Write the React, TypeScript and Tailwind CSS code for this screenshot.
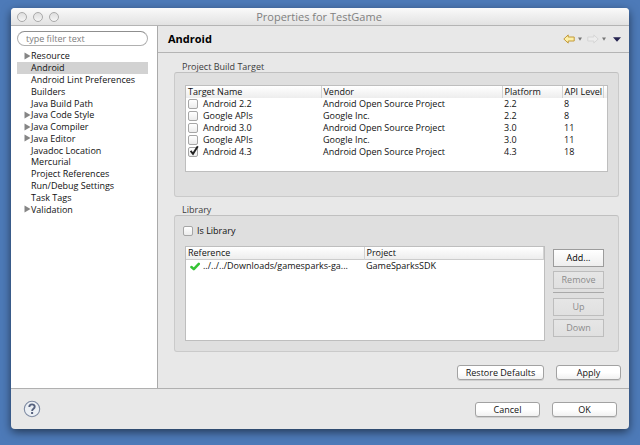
import React from "react";

type Page = { label: string; expandable?: boolean };
type Target = { name: string; vendor: string; platform: string; api: string; checked?: boolean };

const pages: Page[] = [
  { label: "Resource", expandable: true },
  { label: "Android" },
  { label: "Android Lint Preferences" },
  { label: "Builders" },
  { label: "Java Build Path" },
  { label: "Java Code Style", expandable: true },
  { label: "Java Compiler", expandable: true },
  { label: "Java Editor", expandable: true },
  { label: "Javadoc Location" },
  { label: "Mercurial" },
  { label: "Project References" },
  { label: "Run/Debug Settings" },
  { label: "Task Tags" },
  { label: "Validation", expandable: true },
];

const targets: Target[] = [
  { name: "Android 2.2", vendor: "Android Open Source Project", platform: "2.2", api: "8" },
  { name: "Google APIs", vendor: "Google Inc.", platform: "2.2", api: "8" },
  { name: "Android 3.0", vendor: "Android Open Source Project", platform: "3.0", api: "11" },
  { name: "Google APIs", vendor: "Google Inc.", platform: "3.0", api: "11" },
  { name: "Android 4.3", vendor: "Android Open Source Project", platform: "4.3", api: "18", checked: true },
];

function CheckBox({ id, defaultChecked }: { id: string; defaultChecked?: boolean }) {
  return (
    <span className="relative block size-[10px] shrink-0">
      <input
        id={id}
        type="checkbox"
        defaultChecked={defaultChecked}
        className="peer block size-[10px] appearance-none rounded-[2px] border border-[#a6a6a6] bg-linear-to-b from-white to-[#ececec]"
      />
      <svg viewBox="0 0 12 12" className="pointer-events-none absolute -top-0.5 left-0 hidden size-3 peer-checked:block" aria-hidden="true">
        <path d="M2.6 5.8 L5 8.8 L9.8 1.2" fill="none" stroke="#222" strokeWidth="1.9" />
      </svg>
    </span>
  );
}

function SquareButton({ children, disabled }: { children: React.ReactNode; disabled?: boolean }) {
  return (
    <button
      type="button"
      disabled={disabled}
      className="h-[18px] w-full border border-[#9c9c9c] bg-linear-to-b from-white to-[#eeeeee] leading-4 text-black disabled:border-[#bdbdbd] disabled:from-[#e6e6e6] disabled:to-[#e0e0e0] disabled:text-[#8c8c8c]"
    >
      {children}
    </button>
  );
}

function PushButton({ children, wide }: { children: React.ReactNode; wide?: boolean }) {
  return (
    <button
      type="button"
      className={
        (wide ? "w-[87px]" : "w-[65px]") +
        " h-[15px] rounded-[3px] border border-[#a2a2a2] bg-linear-to-b from-white from-50% to-[#f1f1f1] leading-[13px] shadow-[0_1px_0_#cfcfcf]"
      }
    >
      {children}
    </button>
  );
}

function Group({ title, children }: { title: string; children: React.ReactNode }) {
  return (
    <section className="mr-0.5">
      <h2 className="h-[11px] pl-2 leading-[11px] text-[#3c3c3c]">{title}</h2>
      <div className="rounded-[3px] border border-[#cacaca] border-t-[#c0c0c0] bg-[#dfdfdf]">{children}</div>
    </section>
  );
}

const headCell = "h-3 border-[#d2d2d2] pl-0.5 text-left font-medium leading-3";

export default function App() {
  return (
    <div className="flex min-h-screen flex-col bg-[#4d7ab8] px-[11px] pt-2 pb-4 font-['Open_Sans','Noto_Sans',sans-serif] text-[9px] leading-3 font-medium whitespace-nowrap text-[#111111]">
      <main className="flex flex-1 flex-col overflow-hidden rounded-[4px] bg-[#e8e8e8] shadow-[0_3px_10px_rgba(0,0,0,0.55)]">
        <header className="relative flex h-[18px] items-center border-b border-[#b4b4b4] bg-linear-to-b from-[#fafafa] to-[#e2e2e2] pl-1.5">
          <div className="flex gap-1.5">
            {["Close", "Minimize", "Zoom"].map((n) => (
              <button key={n} type="button" aria-label={n} className="size-2.5 rounded-full border border-[#a9a9a9] bg-linear-to-b from-[#dedede] to-[#f5f5f5]" />
            ))}
          </div>
          <h1 className="flex-1 pr-[50px] text-center text-[11px] leading-4 font-normal text-[#808080]">Properties for TestGame</h1>
        </header>

        <div className="flex flex-1">
          <nav aria-label="Property pages" className="w-[147px] shrink-0 border-r border-[#aaaaaa] bg-white pt-[5px] pr-[9px] pl-1.5">
            <input
              type="text"
              aria-label="Filter"
              placeholder="type filter text"
              className="block h-[15px] w-full rounded-full border border-[#b0b0b0] border-t-[#8f8f8f] bg-white px-2 leading-3 placeholder:text-[#7d7d7d]"
            />
            <ul className="mt-1 grid h-[165px] auto-rows-fr">
              {pages.map((p) => (
                <li key={p.label} className={"flex items-center pl-[7px] " + (p.label === "Android" ? "bg-[#d2d2d2]" : "")}>
                  <span className="w-[7px]">
                    {p.expandable && (
                      <svg viewBox="0 0 7 8" className="h-2 w-[7px]" aria-hidden="true">
                        <path d="M0.5 0.5 L6.5 4 L0.5 7.5 Z" fill="#858585" />
                      </svg>
                    )}
                  </span>
                  <a href="#" className="leading-[11px]">{p.label}</a>
                </li>
              ))}
            </ul>
          </nav>

          <section className="flex min-w-0 flex-1 flex-col">
            <div className="flex h-[27px] items-center justify-between border-b border-[#b4b4b4] pr-2 pl-2.5">
              <h2 className="text-[11px] font-bold text-black">Android</h2>
              <div className="flex items-center">
                <button type="button" aria-label="Back" className="flex items-center gap-[3px]">
                  <svg viewBox="0 0 12 10" className="h-2.5 w-3">
                    <path d="M0.8 5 L5.2 0.9 V3 H11.2 V7 H5.2 V9.1 Z" fill="#fdf0a8" stroke="#c39a3a" strokeWidth="1" strokeLinejoin="round" />
                  </svg>
                  <svg viewBox="0 0 4 4" className="size-1"><path d="M0 0.5 H4 L2 3.7 Z" fill="#777" /></svg>
                </button>
                <button type="button" aria-label="Forward" className="ml-[5px] flex items-center gap-[3px]">
                  <svg viewBox="0 0 12 10" className="h-2.5 w-3">
                    <path d="M11.2 5 L6.8 0.9 V3 H0.8 V7 H6.8 V9.1 Z" fill="#ececec" stroke="#d6d6d6" strokeWidth="1" strokeLinejoin="round" />
                  </svg>
                  <svg viewBox="0 0 4 4" className="size-1"><path d="M0 0.5 H4 L2 3.7 Z" fill="#777" /></svg>
                </button>
                <button type="button" aria-label="View menu" className="ml-[7px]">
                  <svg viewBox="0 0 8 5" className="block h-[5px] w-2"><path d="M0 0.3 H8 L4 4.8 Z" fill="#262350" /></svg>
                </button>
              </div>
            </div>

            <div className="flex flex-1 flex-col pt-2 pr-2 pb-2 pl-4">
              <Group title="Project Build Target">
                <div className="px-2.5 pt-3 pb-6">
                  <div className="h-[87px] border border-[#bebebe] bg-white">
                    <table className="w-full table-fixed border-collapse">
                      <thead>
                        <tr className="bg-linear-to-b from-white to-[#ededed]">
                          <th className={headCell + " w-[135px] border-r"}>Target Name</th>
                          <th className={headCell + " border-r"}>Vendor</th>
                          <th className={headCell + " w-[60px] border-r"}>Platform</th>
                          <th className={headCell + " w-[41px] border-r"}>API Level</th>
                          <th className="w-1" aria-hidden="true" />
                        </tr>
                      </thead>
                      <tbody>
                        {targets.map((t, i) => (
                          <tr key={i}>
                            <td className="h-3 p-0 pl-0.5">
                              <div className="flex items-center gap-[5px]">
                                <CheckBox id={"target" + i} defaultChecked={t.checked} />
                                <label htmlFor={"target" + i}>{t.name}</label>
                              </div>
                            </td>
                            <td className="h-3 p-0 pl-0.5">{t.vendor}</td>
                            <td className="h-3 p-0 pl-0.5">{t.platform}</td>
                            <td className="h-3 p-0 pl-0.5">{t.api}</td>
                            <td />
                          </tr>
                        ))}
                      </tbody>
                    </table>
                  </div>
                </div>
              </Group>

              <div className="mt-[7px]">
                <Group title="Library">
                  <div className="px-2.5 pt-[9px] pb-2.5">
                    <div className="-ml-0.5 flex items-center gap-1">
                      <CheckBox id="isLibrary" />
                      <label htmlFor="isLibrary">Is Library</label>
                    </div>
                    <div className="mt-[9px] flex gap-2">
                      <div className="h-[95px] min-w-0 flex-1 border border-[#bebebe] bg-white">
                        <table className="w-full table-fixed border-collapse">
                          <thead>
                            <tr className="border-b border-[#cccccc] bg-linear-to-b from-white to-[#ededed]">
                              <th className={headCell + " w-[178px] border-r"}>Reference</th>
                              <th className={headCell + " border-r"}>Project</th>
                            </tr>
                          </thead>
                          <tbody>
                            <tr>
                              <td className="h-3 p-0 pl-1">
                                <div className="flex items-center gap-[3px]">
                                  <svg viewBox="0 0 10 9" className="h-[9px] w-2.5" aria-hidden="true">
                                    <path d="M1.4 5 L3.8 7.2 L8.8 1.8" fill="none" stroke="#35c335" strokeWidth="2.5" strokeLinecap="round" strokeLinejoin="round" />
                                  </svg>
                                  <span>../../../Downloads/gamesparks-ga...</span>
                                </div>
                              </td>
                              <td className="p-0 pl-0.5">GameSparksSDK</td>
                            </tr>
                          </tbody>
                        </table>
                      </div>
                      <div className="mr-1 flex w-[51px] flex-col pt-[3px]">
                        <SquareButton>Add...</SquareButton>
                        <div className="mt-1"><SquareButton disabled>Remove</SquareButton></div>
                        <hr className="mt-[3px] mb-[5px] border-[#a9a9a9]" />
                        <SquareButton disabled>Up</SquareButton>
                        <div className="mt-[3px]"><SquareButton disabled>Down</SquareButton></div>
                      </div>
                    </div>
                  </div>
                </Group>
              </div>

              <div className="mt-auto flex justify-end gap-3">
                <PushButton wide>Restore Defaults</PushButton>
                <PushButton>Apply</PushButton>
              </div>
            </div>
          </section>
        </div>

        <footer className="flex h-[41px] items-center gap-3 border-t border-[#b0b0b0] pr-3 pl-3">
          <button type="button" aria-label="Help" className="mr-auto">
            <svg viewBox="0 0 18 18" className="block size-[18px]">
              <circle cx="9" cy="9" r="7.7" fill="#ebeff4" stroke="#7f8ba3" strokeWidth="1.1" />
              <path d="M6.3 7 C6.3 3.4 11.8 3.6 11.7 6.7 C11.7 8.7 9.1 8.6 9.1 10.9" fill="none" stroke="#56617e" strokeWidth="1.9" />
              <rect x="8.1" y="12" width="2" height="2" fill="#56617e" />
            </svg>
          </button>
          <PushButton>Cancel</PushButton>
          <PushButton>OK</PushButton>
        </footer>
      </main>
    </div>
  );
}
